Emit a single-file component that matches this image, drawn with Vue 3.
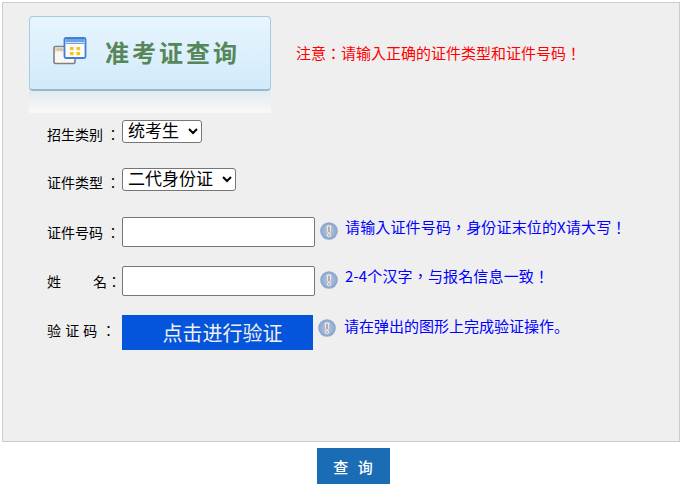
<script setup>
const rows = [
  { key: 'a', label: '招生类别', kind: 'select', options: ['统考生'], cls: 'row-a' },
  { key: 'b', label: '证件类型', kind: 'select', options: ['二代身份证'], cls: 'row-b' },
  { key: 'c', label: '证件号码', kind: 'input', tip: '请输入证件号码，身份证末位的X请大写！', cls: 'row-c' },
  { key: 'd', label: '姓名', kind: 'input', tip: '2-4个汉字，与报名信息一致！', cls: 'row-d' },
]
</script>

<template>
  <div class="page">
    <div class="panel">
      <div class="head">
        <div class="banner-wrap">
          <div class="banner">
            <svg class="banner-icon" width="34" height="28" viewBox="0 0 34 28">
              <rect x="1" y="9.5" width="21" height="17" rx="1.5" fill="#f7f7f5" stroke="#7f7f7f" stroke-width="1.6" />
              <rect x="2" y="10.5" width="19" height="4" fill="#d9d9d6" />
              <circle cx="5" cy="12.5" r="1" fill="#e8a94a" />
              <circle cx="8" cy="12.5" r="1" fill="#e8a94a" />
              <rect x="11.5" y="1" width="21" height="20" rx="1.5" fill="#fdfcf4" stroke="#3f7fd4" stroke-width="1.8" />
              <rect x="12.5" y="2" width="19" height="5" fill="#6fa3e6" />
              <rect x="12.5" y="5" width="19" height="1" fill="#cfe0f7" />
              <rect x="17" y="10" width="3.6" height="3.2" fill="#f5c22e" />
              <rect x="23.5" y="10" width="3.6" height="3.2" fill="#f5c22e" />
              <rect x="17" y="15" width="3.6" height="3.2" fill="#f5c22e" />
              <rect x="23.5" y="15" width="3.6" height="3.2" fill="#f5c22e" />
            </svg>
            <span class="banner-text">准考证查询</span>
          </div>
          <div class="reflection"></div>
        </div>
        <p class="notice">注意：请输入正确的证件类型和证件号码！</p>
      </div>

      <div v-for="r in rows" :key="r.key" class="row" :class="r.cls">
        <span class="label" :class="{ spread: r.key === 'd' }">
          <template v-if="r.key === 'd'"><span>姓</span><span>名</span></template>
          <template v-else>{{ r.label }}</template>
        </span><span class="colon">：</span>
        <select v-if="r.kind === 'select'" class="sel">
          <option v-for="o in r.options" :key="o">{{ o }}</option>
        </select>
        <template v-else>
          <input class="txt" type="text" />
          <svg class="tip-icon" width="18" height="18" viewBox="0 0 18 18">
            <defs>
              <radialGradient :id="'g' + r.key" cx="50%" cy="50%" r="55%">
                <stop offset="0%" stop-color="#bccbe4" />
                <stop offset="100%" stop-color="#849fcd" />
              </radialGradient>
            </defs>
            <circle cx="9" cy="9" r="8.8" :fill="'url(#g' + r.key + ')'" />
            <path d="M6.6 4.6a2.4 1.4 0 0 1 4.8 0L10.6 10.6H7.4z" fill="#efecdf" />
            <circle cx="9" cy="13.2" r="2.1" fill="#efecdf" />
            <rect x="8.1" y="4.6" width="1.8" height="5.4" fill="#77746a" opacity=".55" />
            <circle cx="9" cy="13.2" r="1" fill="#77746a" opacity=".55" />
          </svg>
          <span class="tip">{{ r.tip }}</span>
        </template>
      </div>

      <div class="row row-e">
        <span class="label cap">验 证 码 ：</span>
        <div class="verify">点击进行验证</div>
        <svg class="tip-icon" width="18" height="18" viewBox="0 0 18 18">
          <defs>
            <radialGradient id="ge" cx="50%" cy="50%" r="55%">
              <stop offset="0%" stop-color="#bccbe4" />
              <stop offset="100%" stop-color="#849fcd" />
            </radialGradient>
          </defs>
          <circle cx="9" cy="9" r="8.8" fill="url(#ge)" />
          <path d="M6.6 4.6a2.4 1.4 0 0 1 4.8 0L10.6 10.6H7.4z" fill="#efecdf" />
          <circle cx="9" cy="13.2" r="2.1" fill="#efecdf" />
          <rect x="8.1" y="4.6" width="1.8" height="5.4" fill="#77746a" opacity=".55" />
          <circle cx="9" cy="13.2" r="1" fill="#77746a" opacity=".55" />
        </svg>
        <span class="tip tip-sc">请在弹出的图形上完成验证操作。</span>
      </div>
    </div>
    <div class="foot"><button class="query" type="button">查 询</button></div>
  </div>
</template>

<style scoped>
.page {
  width: 682px;
  height: 487px;
  padding: 2px 2px 0;
  box-sizing: border-box;
  font-family: "Noto Sans CJK TC", "Noto Sans CJK SC", "Liberation Sans", sans-serif;
  font-size: 14px;
  color: #000;
  background: #fff;
}
.panel {
  height: 440px;
  box-sizing: border-box;
  border: 1px solid #ccc;
  background: #efefef;
  padding: 13px 0 0 26px;
}
.head {
  display: flex;
  align-items: flex-start;
}
.banner-wrap {
  width: 242px;
  height: 97px;
  flex: none;
}
.banner {
  height: 75px;
  box-sizing: border-box;
  border: 1px solid #a9cbe2;
  border-bottom: 2px solid #93b9d5;
  border-radius: 4px;
  background: linear-gradient(#e7f5fe, #d2eafa);
  display: flex;
  align-items: center;
  padding: 0 0 2px 23px;
}
.banner-icon {
  flex: none;
  margin-right: 18px;
  margin-top: -2px;
}
.banner-text {
  font-size: 24px;
  font-weight: 700;
  letter-spacing: 3px;
  color: #568659;
  line-height: 1;
}
.reflection {
  height: 22px;
  background: linear-gradient(#e2ebf1, #f3f4f4 70%, #f8f8f8);
}
.notice {
  margin: 27px 0 0 25px;
  color: #f00;
  font-size: 15px;
  line-height: 20px;
}
.row {
  display: flex;
  align-items: flex-start;
  padding-left: 18px;
}
.label {
  width: 56px;
  line-height: 20px;
  flex: none;
}
.spread {
  display: flex;
  justify-content: space-between;
  width: 60px;
}
.colon {
  width: 19px;
  box-sizing: border-box;
  padding-left: 3px;
  flex: none;
  line-height: 20px;
}
.row-d .colon {
  width: 15px;
  padding-left: 0;
}
.cap {
  width: 75px;
  white-space: pre;
  word-spacing: 1px;
}
.row-a { margin-top: 7px; height: 48px; }
.row-b { height: 49px; }
.row-c { height: 49px; }
.row-d { height: 49px; }
.row-a .label, .row-a .colon { margin-top: 4px; }
.row-b .label, .row-b .colon { margin-top: 4px; }
.row-c .label, .row-c .colon { margin-top: 5px; }
.row-d .label, .row-d .colon { margin-top: 5px; }
.row-e .label { margin-top: 5px; }
.sel {
  font-family: "Liberation Sans", "Noto Sans CJK SC", sans-serif;
  font-size: 17px;
  line-height: 20px;
  height: 23px;
  padding: 0 0 0 1px;
  border: 1px solid #767676;
  border-radius: 3px;
  background: #fff;
  color: #000;
}
.row-a .sel { width: 80px; }
.row-b .sel { width: 114px; }
.txt {
  width: 193px;
  height: 30px;
  box-sizing: border-box;
  border: 1px solid #767676;
  border-radius: 2px;
  background: #fff;
  padding: 0 2px;
  margin: 0;
  flex: none;
}
.tip-icon {
  flex: none;
  margin: 5px 0 0 5px;
}
.tip {
  color: #00f;
  font-size: 15px;
  line-height: 20px;
  letter-spacing: 0.15px;
  margin: 0 0 0 7px;
  white-space: nowrap;
}
.tip-sc {
  font-family: "Noto Sans CJK SC", sans-serif;
  letter-spacing: 0;
}
.verify {
  width: 191px;
  height: 35px;
  box-sizing: border-box;
  padding-left: 10px;
  flex: none;
  background: #0455db;
  color: #f0f0f0;
  font-size: 20px;
  line-height: 35px;
  text-align: center;
}
.row-e .tip-icon { margin: 4px 0 0 5px; }
.row-e .tip { margin: 1px 0 0 8px; }
.foot {
  display: flex;
  justify-content: center;
  padding: 6px 0 0 24px;
}
.query {
  width: 73px;
  height: 36px;
  border: 0;
  padding: 0 0 0 3px;
  background: #1a6cb5;
  color: #fff;
  font-family: "Noto Sans CJK SC", sans-serif;
  font-size: 15px;
  font-weight: 500;
  letter-spacing: 3px;
}
</style>
